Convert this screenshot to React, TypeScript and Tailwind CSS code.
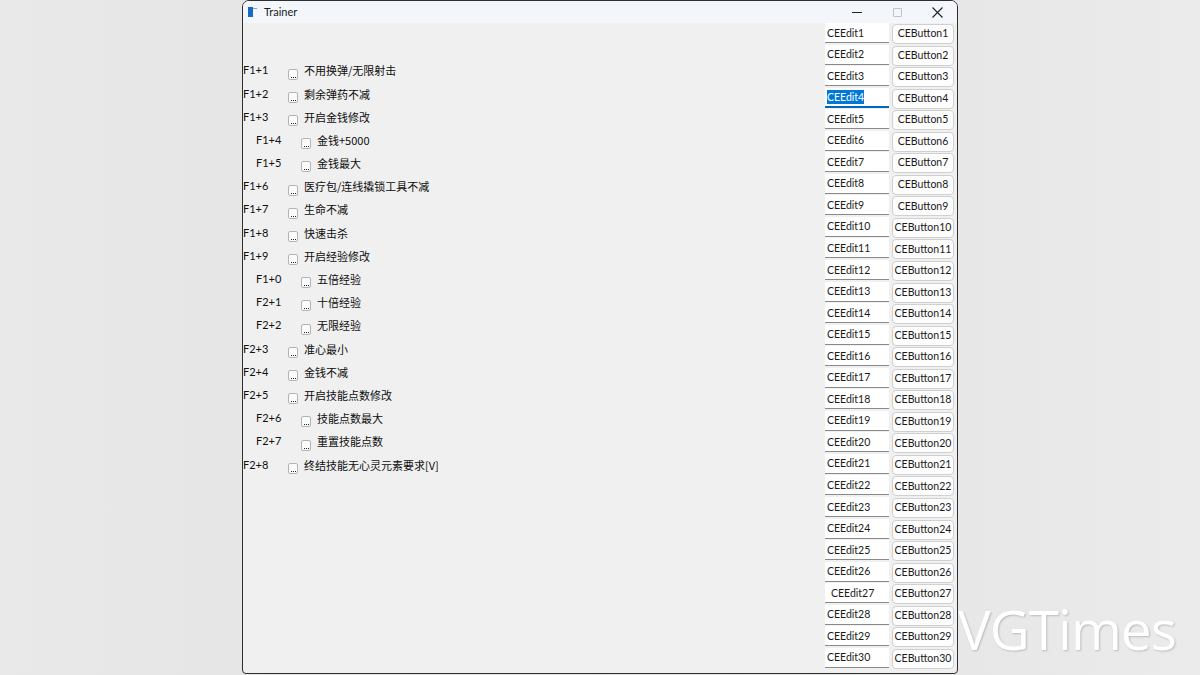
import React from 'react';

interface Cheat {
  key: string;
  label: string;
  sub?: boolean;
}

const cheats: Cheat[] = [
  { key: 'F1+1', label: '不用换弹/无限射击' },
  { key: 'F1+2', label: '剩余弹药不减' },
  { key: 'F1+3', label: '开启金钱修改' },
  { key: 'F1+4', label: '金钱+5000', sub: true },
  { key: 'F1+5', label: '金钱最大', sub: true },
  { key: 'F1+6', label: '医疗包/连线撬锁工具不减' },
  { key: 'F1+7', label: '生命不减' },
  { key: 'F1+8', label: '快速击杀' },
  { key: 'F1+9', label: '开启经验修改' },
  { key: 'F1+0', label: '五倍经验', sub: true },
  { key: 'F2+1', label: '十倍经验', sub: true },
  { key: 'F2+2', label: '无限经验', sub: true },
  { key: 'F2+3', label: '准心最小' },
  { key: 'F2+4', label: '金钱不减' },
  { key: 'F2+5', label: '开启技能点数修改' },
  { key: 'F2+6', label: '技能点数最大', sub: true },
  { key: 'F2+7', label: '重置技能点数', sub: true },
  { key: 'F2+8', label: '终结技能无心灵元素要求[V]' },
];

const ui = { fontFamily: 'Lato, "Noto Sans", "Noto Sans CJK SC", sans-serif' };
const cjk = { fontFamily: '"Noto Sans CJK SC", "Noto Sans", sans-serif' };

function DotBox() {
  return (
    <div className="mt-[7px] flex h-[11px] w-[10px] items-end justify-center gap-[1px] rounded-[2px] border border-[#b4b4b4] bg-[#fbfbfb] pb-[1px]">
      <div className="h-[1px] w-[1px] bg-[#222]" />
      <div className="h-[1px] w-[1px] bg-[#222]" />
      <div className="h-[1px] w-[1px] bg-[#222]" />
    </div>
  );
}

function CheatRow({ cheat }: { cheat: Cheat }) {
  return (
    <div className={`flex h-[23.2px] items-center ${cheat.sub ? 'pl-[13px]' : 'pl-0'}`}>
      <span className="w-[45px] text-[11px] text-[#111]" style={ui}>{cheat.key}</span>
      <DotBox />
      <span className="ml-[6px] text-[11px] text-[#0d0d0d]" style={cjk}>{cheat.label}</span>
    </div>
  );
}

function EditRow({ n }: { n: number }) {
  const selected = n === 4;
  return (
    <div className="flex h-[21.55px] items-start gap-[3px]">
      <div
        className={`flex h-[20px] w-[64px] items-center bg-white ${n === 27 ? 'pl-[6px]' : 'pl-[2px]'} ${
          selected ? 'border-b-2 border-[#0067c0]' : 'border-b border-[#8a8a8a]'
        }`}
      >
        <span
          className={`text-[10.5px] leading-[14px] ${selected ? 'bg-[#0078d7] text-white' : 'text-[#1a1a1a]'}`}
          style={ui}
        >
          CEEdit{n}
        </span>
      </div>
      <div
        className="mt-[1px] flex h-[20px] w-[62px] items-center justify-center rounded-[4px] border border-[#d0d0d0] bg-[#fdfdfd] text-[10.5px] text-[#1a1a1a]"
        style={ui}
      >
        CEButton{n}
      </div>
    </div>
  );
}

export default function App() {
  const rows = Array.from({ length: 30 }, (_, i) => i + 1);
  return (
    <div className="relative flex h-[675px] w-[1200px] overflow-hidden bg-gradient-to-r from-[#e9e9e9] via-[#e2e2e2] to-[#ebebeb]">
      {/* Trainer window */}
      <div className="ml-[242px] flex h-[674px] w-[716px] flex-col overflow-hidden rounded-t-[7px] rounded-b-[4px] border border-[#2f2f2f] bg-[#f0f0f0]">
        {/* Title bar */}
        <div className="flex h-[22px] items-center bg-[#f3f6fa]">
          <div className="ml-[5px] flex h-[10px] w-[10px] items-start">
            <div className="h-[10px] w-[5px] bg-[#1668c9]" />
            <div className="mt-[1px] h-[1px] w-[4px] bg-[#7aa7de]" />
          </div>
          <span className="ml-[6px] text-[11px] text-[#1a1a1a]" style={ui}>Trainer</span>
          <div className="ml-auto flex h-full items-center">
            <div className="flex w-[40px] justify-center">
              <div className="h-[1px] w-[10px] bg-[#222]" />
            </div>
            <div className="flex w-[40px] justify-center">
              <div className="h-[9px] w-[9px] rounded-[1px] border border-[#c4c4c4]" />
            </div>
            <div className="flex w-[40px] justify-center">
              <svg width="11" height="11" viewBox="0 0 11 11">
                <path d="M0.5 0.5 L10.5 10.5 M10.5 0.5 L0.5 10.5" stroke="#222" strokeWidth="1.1" />
              </svg>
            </div>
          </div>
        </div>

        {/* Body */}
        <div className="flex flex-1">
          <div className="flex-1 pt-[36px]">
            {cheats.map((c) => (
              <CheatRow key={c.key} cheat={c} />
            ))}
          </div>
          <div className="mr-[2px] w-[130px]">
            {rows.map((n) => (
              <EditRow key={n} n={n} />
            ))}
          </div>
        </div>
      </div>

      {/* Watermark */}
      <div
        className="absolute left-[958px] top-[596px] text-[55px] leading-[66px] tracking-[-1px] text-white"
        style={{ fontFamily: '"Open Sans", sans-serif', textShadow: '1px 1px 2px rgba(0,0,0,0.2)' }}
      >
        VGTimes
      </div>
    </div>
  );
}
